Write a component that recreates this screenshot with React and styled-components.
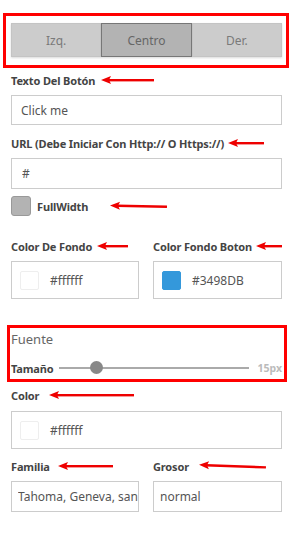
import React from 'react';
import styled, { createGlobalStyle } from 'styled-components';

const GlobalStyle = createGlobalStyle`
  body {
    margin: 0;
    background: #fff;
    font-family: 'Noto Sans', 'Open Sans', sans-serif;
  }
`;

const Page = styled.div`
  width: 294px;
  padding-top: 13px;
  display: flex;
  flex-direction: column;
`;

const Highlight = styled.div`
  border: 3px solid #ff0000;
  box-sizing: border-box;
  margin-left: ${(p) => p.left}px;
  width: ${(p) => p.width}px;
  padding: ${(p) => p.pad};
`;

const Segmented = styled.div`
  display: flex;
  height: 34px;
  box-shadow: 0 1px 2px rgba(0, 0, 0, 0.15);
`;

const SegButton = styled.div`
  flex: 1;
  display: flex;
  align-items: center;
  justify-content: center;
  box-sizing: border-box;
  font-size: 12px;
  color: ${(p) => (p.active ? '#666' : '#7a7a7a')};
  background: ${(p) => (p.active ? '#b3b3b3' : '#cccccc')};
  border: 1px solid ${(p) => (p.active ? '#777' : '#c4c4c4')};
`;

const Section = styled.div`
  padding: 0 12px 0 11px;
  margin-top: ${(p) => p.top || 0}px;
  display: flex;
  flex-direction: column;
`;

const Label = styled.div`
  display: flex;
  align-items: center;
  height: 16px;
  font-size: 11px;
  letter-spacing: -0.15px;
  font-weight: 700;
  color: #444;
  white-space: nowrap;
`;

const TextInput = styled.input`
  box-sizing: border-box;
  width: 100%;
  height: ${(p) => p.h || 31}px;
  margin-top: ${(p) => p.gap || 7}px;
  border: 1px solid #ccc;
  padding: 0 0 0 ${(p) => p.padLeft || 9}px;
  font-family: inherit;
  font-size: 12px;
  color: #555;
  background: #fff;
  outline: none;
`;

const CheckRow = styled.div`
  display: flex;
  align-items: center;
  margin-top: 7px;
  height: 20px;
  font-size: 11px;
  letter-spacing: -0.15px;
  font-weight: 700;
  color: #444;
`;

const CheckBox = styled.div`
  width: 20px;
  height: 20px;
  box-sizing: border-box;
  background: #b3b3b3;
  border: 1px solid #999;
  border-radius: 3px;
  margin-right: 6px;
`;

const Columns = styled.div`
  display: grid;
  grid-template-columns: 128px 129px;
  column-gap: 14px;
`;

const ColorField = styled.div`
  box-sizing: border-box;
  height: 38px;
  margin-top: ${(p) => p.gap || 7}px;
  border: 1px solid #ccc;
  display: flex;
  align-items: center;
  padding-left: 8px;
  font-size: 12px;
  color: #555;
`;

const Swatch = styled.div`
  width: 19px;
  height: 19px;
  box-sizing: border-box;
  border-radius: 2px;
  background: ${(p) => p.color};
  border: 1px solid ${(p) => (p.color === '#ffffff' ? '#eee' : p.color)};
  margin-right: 11px;
`;

const Fuente = styled.div`
  font-size: 13px;
  line-height: 16px;
  color: #666;
  margin-top: 3px;
`;

const SliderRow = styled.div`
  display: flex;
  align-items: center;
  height: 16px;
  margin-top: 13px;
  margin-bottom: 3px;
`;

const Track = styled.div`
  position: relative;
  flex: 1;
  height: 2px;
  background: #aaa;
  margin: 0 8px 0 5px;
`;

const Thumb = styled.div`
  position: absolute;
  top: -6px;
  width: 13px;
  height: 13px;
  border-radius: 50%;
  background: #888;
`;

const SizeValue = styled.span`
  font-size: 10.5px;
  font-weight: 700;
  color: #bbb;
`;

const Arrow = ({ width, left, tilt = 0 }) => (
  <svg
    width={width}
    height="10"
    viewBox={`0 0 ${width} 10`}
    style={{ marginLeft: left, transform: `rotate(${tilt}deg)`, flexShrink: 0 }}
  >
    <path d="M0 5 L10 1 L8 5 L10 9 Z" fill="#ee0000" />
    <rect x="7" y="4" width={width - 7} height="2.4" fill="#ee0000" />
  </svg>
);

export default function App() {
  return (
    <>
      <GlobalStyle />
      <Page>
        <Highlight left={3} width={286} pad="7px 4px 8px 5px">
          <Segmented>
            <SegButton>Izq.</SegButton>
            <SegButton active>Centro</SegButton>
            <SegButton>Der.</SegButton>
          </Segmented>
        </Highlight>

        <Section top={4}>
          <Label>
            Texto Del Botón
            <Arrow width={53} left={6} />
          </Label>
          <TextInput h={30} value="Click me" readOnly />

          <Label style={{ marginTop: 10 }}>
            URL (Debe Iniciar Con Http:// O Https://)
            <Arrow width={36} left={4} />
          </Label>
          <TextInput value="#" padLeft={10} readOnly />

          <CheckRow>
            <CheckBox />
            FullWidth
            <Arrow width={57} left={22} tilt={1} />
          </CheckRow>

          <Columns style={{ marginTop: 22 }}>
            <div>
              <Label>
                Color De Fondo
                <Arrow width={31} left={5} />
              </Label>
              <ColorField>
                <Swatch color="#ffffff" />
                #ffffff
              </ColorField>
            </div>
            <div>
              <Label>
                Color Fondo Boton
                <Arrow width={26} left={4} />
              </Label>
              <ColorField>
                <Swatch color="#3498DB" />
                #3498DB
              </ColorField>
            </div>
          </Columns>
        </Section>

        <Highlight left={7} width={280} pad="0 2px 0 1px" style={{ marginTop: 26 }}>
          <Fuente>Fuente</Fuente>
          <SliderRow>
            <Label>Tamaño</Label>
            <Track>
              <Thumb style={{ left: `${(31 / 190) * 100}%` }} />
            </Track>
            <SizeValue>15px</SizeValue>
          </SliderRow>
        </Highlight>

        <Section top={5}>
          <Label>
            Color
            <Arrow width={85} left={10} />
          </Label>
          <ColorField gap={8}>
            <Swatch color="#ffffff" />
            #ffffff
          </ColorField>

          <Columns style={{ marginTop: 9 }}>
            <div>
              <Label>
                Familia
                <Arrow width={55} left={8} />
              </Label>
              <TextInput value="Tahoma, Geneva, sans-serif" padLeft={6} readOnly />
            </div>
            <div>
              <Label>
                Grosor
                <Arrow width={67} left={10} tilt={2} />
              </Label>
              <TextInput value="normal" padLeft={6} readOnly />
            </div>
          </Columns>
        </Section>
      </Page>
    </>
  );
}
